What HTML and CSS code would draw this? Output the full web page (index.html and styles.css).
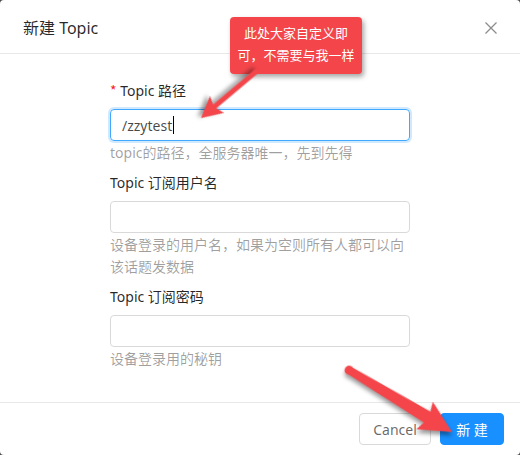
FILE: index.html
```html
<!DOCTYPE html>
<html lang="zh">
<head>
<meta charset="utf-8">
<title>新建 Topic</title>
<link rel="stylesheet" href="styles.css">
</head>
<body>
<div class="modal">
  <div class="modal-header">
    <div class="modal-title">新建 Topic</div>
    <svg class="close" width="14" height="14" viewBox="0 0 14 14"><path d="M1.5 1.5 L12.5 12.5 M12.5 1.5 L1.5 12.5" stroke="#8c8c8c" stroke-width="1.3" fill="none"/></svg>
  </div>
  <div class="modal-body">
    <div class="form-item">
      <div class="label"><span class="req">*</span> Topic 路径</div>
      <div class="input focused"><span class="value">/zzytest</span><span class="caret"></span></div>
      <div class="help">topic的路径，全服务器唯一，先到先得</div>
    </div>
    <div class="form-item">
      <div class="label">Topic 订阅用户名</div>
      <div class="input"></div>
      <div class="help">设备登录的用户名，如果为空则所有人都可以向该话题发数据</div>
    </div>
    <div class="form-item">
      <div class="label">Topic 订阅密码</div>
      <div class="input"></div>
      <div class="help">设备登录用的秘钥</div>
    </div>
  </div>
  <div class="modal-footer">
    <button class="btn btn-cancel">Cancel</button>
    <button class="btn btn-primary">新 建</button>
  </div>

  <div class="callout">此处大家自定义即<br>可，不需要与我一样</div>

  <svg class="arrows" width="520" height="455" viewBox="0 0 520 455">
    <g class="arrow" transform="translate(201 118) rotate(139.9)">
      <line x1="-72" y1="0" x2="-14" y2="0" stroke="#f4454a" stroke-width="5" stroke-linecap="round"/>
      <polygon points="0,0 -21,-11 -17,0 -21,11" fill="#f4454a"/>
    </g>
    <g class="arrow" transform="translate(452 432) rotate(31)">
      <path d="M-120,-4 L-26,-6.5 L-26,6.5 L-120,4 Z" fill="#f4454a"/>
      <circle cx="-120" cy="0" r="4.5" fill="#f4454a"/>
      <polygon points="0,0 -32,-16 -27,0 -32,16" fill="#f4454a"/>
    </g>
  </svg>
</div>
</body>
</html>
```

FILE: styles.css
```css
html, body {
  margin: 0;
  padding: 0;
  background: #4a4a4a;
}

body {
  font-family: "Noto Sans", "Noto Sans CJK SC", sans-serif;
  font-size: 14px;
  color: rgba(0, 0, 0, 0.65);
}

.modal {
  position: relative;
  width: 520px;
  height: 455px;
  background: #fff;
  border-radius: 4px;
  display: flex;
  flex-direction: column;
  overflow: hidden;
}

.modal-header {
  display: flex;
  align-items: center;
  justify-content: space-between;
  padding: 17px 22px 14px 23px;
  border-bottom: 1px solid #e8e8e8;
}

.modal-title {
  font-size: 16px;
  line-height: 22px;
  color: rgba(0, 0, 0, 0.85);
}

.close {
  display: block;
}

.modal-body {
  flex: 1;
  padding: 25px 110px 0 110px;
}

.form-item {
  margin-bottom: 8px;
}

.label {
  line-height: 22px;
  color: rgba(0, 0, 0, 0.85);
  margin-bottom: 7px;
}

.req {
  color: #f5222d;
  font-family: "Noto Sans CJK SC", sans-serif;
}

.input {
  box-sizing: border-box;
  height: 32px;
  width: 300px;
  border: 1px solid #d9d9d9;
  border-radius: 4px;
  padding: 0 11px;
  display: flex;
  align-items: center;
  color: rgba(0, 0, 0, 0.72);
}

.input.focused {
  border-color: #40a9ff;
  box-shadow: 0 0 0 2px rgba(24, 144, 255, 0.2);
}

.caret {
  display: inline-block;
  width: 1px;
  height: 18px;
  background: #000;
  margin-left: 1px;
}

.help {
  line-height: 22px;
  margin-top: 1px;
  color: rgba(0, 0, 0, 0.38);
}

.modal-footer {
  border-top: 1px solid #e8e8e8;
  height: 53px;
  box-sizing: border-box;
  padding: 10px 16px 0 0;
  display: flex;
  justify-content: flex-end;
  align-items: flex-start;
  gap: 9px;
}

.btn {
  height: 32px;
  padding: 0;
  border: 1px solid #d9d9d9;
  border-radius: 4px;
  background: #fff;
  font-family: "Noto Sans", "Noto Sans CJK SC", sans-serif;
  font-size: 14px;
  color: rgba(0, 0, 0, 0.6);
  text-align: center;
}

.btn-cancel {
  width: 72px;
}

.btn-primary {
  background: #1890ff;
  border-color: #1890ff;
  color: #fff;
  width: 64px;
}

.callout {
  position: absolute;
  left: 230px;
  top: 17px;
  width: 132px;
  height: 57px;
  box-sizing: border-box;
  padding-top: 5px;
  background: #f4454a;
  border-radius: 4px;
  color: #fff;
  font-size: 13px;
  line-height: 22px;
  text-align: center;
  font-family: "Noto Sans CJK SC", sans-serif;
  box-shadow: 2px 3px 5px rgba(0, 0, 0, 0.35);
}

.arrows {
  position: absolute;
  left: 0;
  top: 0;
  pointer-events: none;
}

.arrow {
  filter: drop-shadow(2px 3px 2px rgba(0, 0, 0, 0.4));
}
```
